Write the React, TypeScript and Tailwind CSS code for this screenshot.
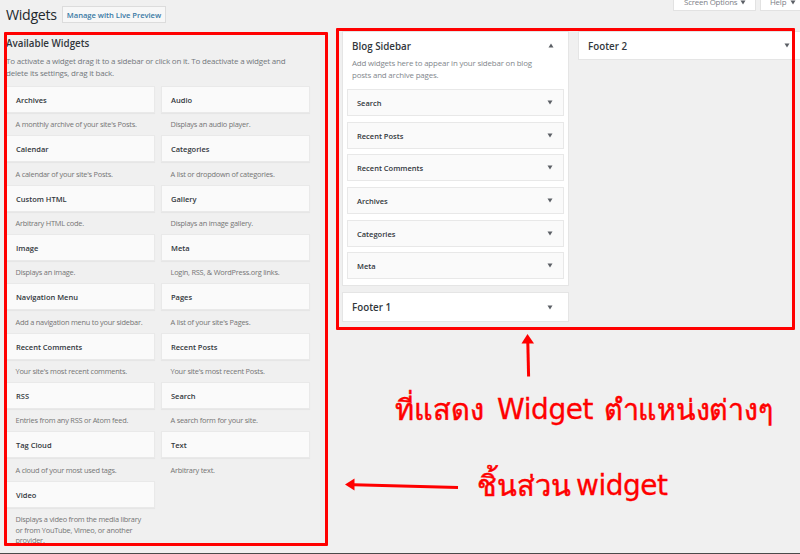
import React from "react";

const available: [string, string][] = [
  ["Archives", "A monthly archive of your site's Posts."],
  ["Audio", "Displays an audio player."],
  ["Calendar", "A calendar of your site's Posts."],
  ["Categories", "A list or dropdown of categories."],
  ["Custom HTML", "Arbitrary HTML code."],
  ["Gallery", "Displays an image gallery."],
  ["Image", "Displays an image."],
  ["Meta", "Login, RSS, & WordPress.org links."],
  ["Navigation Menu", "Add a navigation menu to your sidebar."],
  ["Pages", "A list of your site's Pages."],
  ["Recent Comments", "Your site's most recent comments."],
  ["Recent Posts", "Your site's most recent Posts."],
  ["RSS", "Entries from any RSS or Atom feed."],
  ["Search", "A search form for your site."],
  ["Tag Cloud", "A cloud of your most used tags."],
  ["Text", "Arbitrary text."],
];

const placed = ["Search", "Recent Posts", "Recent Comments", "Archives", "Categories", "Meta"];

function Caret({ up = false }: { up?: boolean }) {
  return (
    <svg width="6" height="5" viewBox="0 0 6 5" className="shrink-0 fill-[#5c6066]">
      <path d={up ? "M0.5 4.5h5L3 0.5z" : "M0.5 0.5h5L3 4.5z"} />
    </svg>
  );
}

function Tile({ title, children }: { title: string; children: React.ReactNode }) {
  return (
    <div className="h-[49.33px]">
      <div className="flex h-[27px] items-center border border-[#e9e9e9] bg-[#fafafa] pt-[2px] pl-[9px] text-[7.5px] font-semibold text-[#32373c] shadow-[0_1px_1px_rgba(0,0,0,0.04)]">
        {title}
      </div>
      <p className="pt-[6.4px] pl-[9.5px] text-[7.4px] leading-[10.5px] tracking-[-0.23px] whitespace-nowrap text-[#757575]">{children}</p>
    </div>
  );
}

export default function App() {
  return (
    <div className="relative flex h-[554px] w-[800px] flex-col overflow-hidden border-b border-[#4a4a4a] bg-[#f0f0f0] font-['Open_Sans','Noto_Sans',sans-serif] text-[#32373c]">
      <header className="flex h-[31px] shrink-0 justify-between">
        <div className="flex pl-[6px]">
          <h1 className="mt-[3px] w-[51px] text-[14.2px] leading-[23px] tracking-[-0.3px] text-[#23282d]">Widgets</h1>
          <button className="ml-[5px] mt-[6px] h-[17px] w-[104px] border border-[#dcdcdc] bg-[#f7f7f7] text-[7.6px] leading-[16px] font-semibold tracking-[-0.03px] whitespace-nowrap text-[#3a7aa5]">
            Manage with Live Preview
          </button>
        </div>
        <div className="flex gap-1 text-[7.9px] tracking-[-0.2px] text-[#7c8087]">
          <div className="flex h-[11px] w-[83px] items-start justify-between border border-t-0 border-[#e2e2e2] bg-white pr-[9px] pl-[10px]">
            <span className="leading-[5px] whitespace-nowrap">Screen Options</span>
            <Caret />
          </div>
          <div className="flex h-[11px] w-[40px] items-start justify-between border border-t-0 border-r-0 border-[#e2e2e2] bg-white pr-[4px] pl-[9px]">
            <span className="leading-[5px]">Help</span>
            <Caret />
          </div>
        </div>
      </header>

      <main className="flex">
        <section className="w-[342px] shrink-0 pl-[6px]">
          <h2 className="pt-[6px] text-[9.8px] leading-[14px] font-semibold text-[#32373c]">Available Widgets</h2>
          <p className="mt-[4px] mb-[8px] text-[8px] leading-[11.5px] tracking-[-0.2px] whitespace-nowrap text-[#72777c]">
            To activate a widget drag it to a sidebar or click on it. To deactivate a widget and
            <br />
            delete its settings, drag it back.
          </p>
          <div className="grid w-[304px] grid-cols-[149px_149px] gap-x-[6px]">
            {available.map(([title, text]) => (
              <Tile key={title} title={title}>{text}</Tile>
            ))}
            <Tile title="Video">
              Displays a video from the media library
              <br />
              or from YouTube, Vimeo, or another
              <br />
              provider.
            </Tile>
          </div>
        </section>

        <section className="w-[227px] shrink-0">
          <div className="h-[255px] border border-[#e5e5e5] bg-white px-[4px]">
            <div className="flex h-[20px] items-end justify-between pr-[10px] pl-[5px]">
              <h3 className="text-[9.8px] leading-[10px] font-semibold text-[#32373c]">Blog Sidebar</h3>
              <div className="pb-[4px]"><Caret up /></div>
            </div>
            <p className="mt-[6px] mb-[8px] pl-[5px] text-[7.9px] leading-[11.5px] tracking-[-0.17px] whitespace-nowrap text-[#82878c]">
              Add widgets here to appear in your sidebar on blog
              <br />
              posts and archive pages.
            </p>
            <div className="flex flex-col gap-[5.7px]">
              {placed.map((name) => (
                <div key={name} className="flex h-[27px] items-center justify-between border border-[#e8e8e8] bg-[#fafafa] pr-[10px] pl-[9px] text-[7.5px] font-semibold">
                  <span className="pt-[2px]">{name}</span>
                  <Caret />
                </div>
              ))}
            </div>
          </div>
          <div className="mt-[6px] flex h-[30px] items-center justify-between border border-[#e5e5e5] bg-white pr-[15px] pl-[9px]">
            <h3 className="pt-[2px] text-[9.8px] font-semibold text-[#32373c]">Footer 1</h3>
            <Caret />
          </div>
        </section>

        <section className="ml-[9px] w-[222px]">
          <div className="flex h-[29px] items-center justify-between border border-r-0 border-[#e5e5e5] bg-white pr-[10px] pl-[9px]">
            <h3 className="pt-[3px] text-[9.8px] font-semibold text-[#32373c]">Footer 2</h3>
            <Caret />
          </div>
        </section>
      </main>

      <div className="absolute top-[32px] left-[4px] h-[514px] w-[324px] rounded-[1px] border-3 border-[#ff0000]" />
      <div className="absolute top-[28px] left-[336px] h-[302px] w-[459px] rounded-[1px] border-3 border-[#ff0000]" />
      <svg className="absolute top-[330px] left-[340px] fill-[#ff0000] stroke-[#ff0000]" width="210" height="170">
        <path d="M188.6 46.5L187.8 12" strokeWidth="3" />
        <path d="M187.5 4L194 13.5h-12.5z" stroke="none" />
        <path d="M118 157.5L14 154.7" strokeWidth="3" />
        <path d="M5 154.5l9.5-6v12z" stroke="none" />
      </svg>
      <div className="absolute top-[390px] left-[395px] flex font-['DejaVu_Sans',sans-serif] text-[29px] leading-[40px] whitespace-nowrap text-[#ff0000]">
        <span className="w-[102px] [-webkit-text-stroke:0.5px_#ff0000]">ที่แสดง</span>
        <span className="w-[107px] text-[28px] tracking-[-0.4px] [-webkit-text-stroke:0.3px_#ff0000]">Widget</span>
        <span className="origin-left scale-x-[0.985] [-webkit-text-stroke:0.5px_#ff0000]">ตำแหน่งต่างๆ</span>
      </div>
      <div className="absolute top-[466px] left-[477px] flex font-['DejaVu_Sans',sans-serif] text-[29px] leading-[40px] whitespace-nowrap text-[#ff0000]">
        <span className="w-[99px] [-webkit-text-stroke:0.5px_#ff0000]">ชิ้นส่วน</span>
        <span className="text-[28px] tracking-[-0.5px] [-webkit-text-stroke:0.3px_#ff0000]">widget</span>
      </div>
    </div>
  );
}
